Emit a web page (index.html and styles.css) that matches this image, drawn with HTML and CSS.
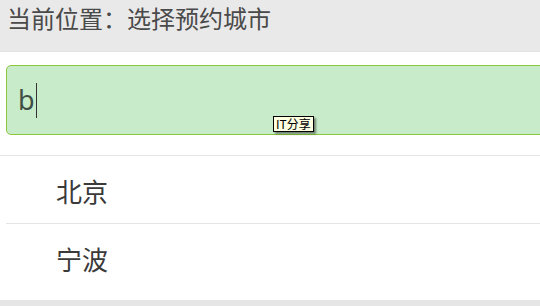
FILE: index.html
```html
<!DOCTYPE html>
<html lang="zh-CN">
<head>
<meta charset="utf-8">
<title>选择预约城市</title>
<link rel="stylesheet" href="styles.css">
</head>
<body>
<div class="page">
  <header class="topbar">当前位置<span class="colon">：</span>选择预约城市</header>
  <div class="search">
    <div class="search-box">
      <span class="typed">b</span><span class="caret"></span>
      <span class="tip">IT分享</span>
    </div>
  </div>
  <ul class="city-list">
    <li class="city">北京</li>
    <li class="city">宁波</li>
  </ul>
  <div class="footer-bar"></div>
</div>
</body>
</html>
```
FILE: styles.css
```css
html, body {
  margin: 0;
  padding: 0;
  background: #fff;
  overflow: hidden;
}
body {
  font-family: "Noto Sans CJK SC", "Noto Sans", "Liberation Sans", sans-serif;
  color: #444;
  width: 540px;
  height: 306px;
}
.page {
  width: 640px;
  display: flex;
  flex-direction: column;
}
.topbar {
  height: 52px;
  box-sizing: border-box;
  background: #e9e9e9;
  border-bottom: 1px solid #e2e2e2;
  padding: 2px 0 0 7px;
  font-size: 24px;
  line-height: 32px;
  color: #4a4a4a;
}
.colon {
  font-family: "Noto Sans CJK TC", sans-serif;
}
.search {
  padding: 13px 0 0 6px;
  height: 104px;
  box-sizing: border-box;
  border-bottom: 1px solid #e5e5e5;
}
.search-box {
  position: relative;
  height: 70px;
  box-sizing: border-box;
  background: #c8ecca;
  border: 1px solid #8cc63f;
  border-radius: 5px;
  display: flex;
  align-items: center;
  padding-left: 11px;
}
.typed {
  font-size: 27px;
  line-height: 36px;
  color: #3f4f45;
  font-family: "Noto Sans", "Liberation Sans", sans-serif;
}
.caret {
  width: 1px;
  height: 35px;
  background: #333;
  margin-left: 1px;
}
.tip {
  position: absolute;
  left: 266px;
  top: 50px;
  font-size: 12px;
  line-height: 14px;
  padding: 0 2px;
  background: #ffffe1;
  border: 1px solid #000;
  color: #000;
  box-shadow: 2px 2px 2px rgba(0,0,0,0.45);
}
.city-list {
  list-style: none;
  margin: 0 0 0 6px;
  padding: 0;
}
.city {
  height: 77px;
  box-sizing: border-box;
  border-top: 1px solid #e5e5e5;
  padding: 17px 0 0 50px;
  font-size: 26px;
  line-height: 36px;
  color: #3a3a3a;
}
.city:first-child {
  border-top: none;
  height: 67px;
}
.footer-bar {
  height: 10px;
  background: #e6e6e6;
}
```
